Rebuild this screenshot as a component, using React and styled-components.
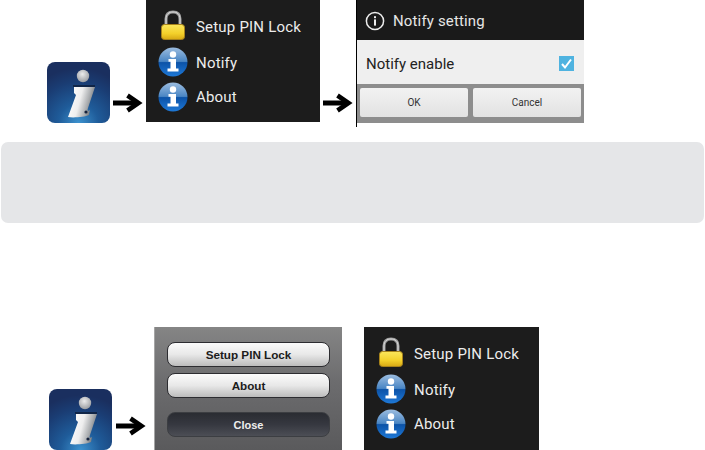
import React from "react";
import styled, { createGlobalStyle } from "styled-components";

const Global = createGlobalStyle`
  html, body { margin: 0; padding: 0; background: #fff; }
  body { font-family: "Roboto", "Liberation Sans", sans-serif; overflow: hidden; }
`;

const Page = styled.div`
  width: 705px;
  height: 450px;
  overflow: hidden;
  display: flex;
  flex-direction: column;
`;

const TopRow = styled.div`
  display: flex;
  align-items: flex-start;
  height: 127px;
  padding-left: 47px;
  flex: none;
`;

const BottomRow = styled.div`
  display: flex;
  align-items: flex-start;
  height: 123px;
  padding-left: 49px;
  margin-top: 104px;
  flex: none;
`;

const IconSlot = styled.div`
  width: 63px;
  height: 61px;
  margin-top: ${(p) => p.$top}px;
  flex: none;
  svg { display: block; }
`;

const ArrowSlot = styled.div`
  width: 30px;
  height: 20px;
  flex: none;
  margin-top: ${(p) => p.$top}px;
  margin-left: ${(p) => p.$left}px;
  margin-right: ${(p) => p.$right}px;
  svg { display: block; }
`;

const MenuPanel = styled.div`
  width: ${(p) => p.$width}px;
  height: ${(p) => p.$height}px;
  margin-top: ${(p) => p.$top}px;
  margin-left: ${(p) => p.$left || 0}px;
  background: #1c1c1c;
  flex: none;
  display: flex;
  flex-direction: column;
  padding-top: 9px;
  box-sizing: border-box;
`;

const MenuRow = styled.div`
  display: flex;
  align-items: center;
  height: ${(p) => p.$h}px;
  color: #ececec;
  font-size: 15px;
  letter-spacing: 0.2px;
`;

const MenuIcon = styled.div`
  width: 30px;
  height: 32px;
  margin-left: 12px;
  margin-right: 8px;
  margin-bottom: ${(p) => p.$lift || 0}px;
  flex: none;
  display: flex;
  align-items: center;
  justify-content: center;
  svg { display: block; }
`;

const DialogWrap = styled.div`
  height: 127px;
  border-left: 1px solid #000;
  flex: none;
  width: 227px;
`;

const DialogTitle = styled.div`
  height: 40px;
  background: #1a1a1a;
  color: #e6e6e6;
  display: flex;
  align-items: center;
  gap: 8px;
  padding: 2px 0 0 8px;
  box-sizing: border-box;
  font-size: 15px;
  letter-spacing: 0.15px;
`;

const DialogBody = styled.div`
  height: 44px;
  background: #efefef;
  color: #222;
  display: flex;
  align-items: center;
  justify-content: space-between;
  padding: 3px 10px 0 9px;
  box-sizing: border-box;
  font-size: 15px;
`;

const CheckBox = styled.div`
  width: 15px;
  height: 15px;
  background: #4fb3e0;
  display: flex;
  align-items: center;
  justify-content: center;
`;

const ButtonBar = styled.div`
  height: 39px;
  background: #8d8d8d;
  display: flex;
  gap: 5px;
  padding: 4px 3px 6px;
  box-sizing: border-box;
`;

const DialogButton = styled.div`
  flex: 1;
  background: linear-gradient(#f2f2f2, #e2e2e2);
  border-radius: 2px;
  color: #333;
  font-size: 10px;
  display: flex;
  align-items: center;
  justify-content: center;
`;

const Banner = styled.div`
  margin: 15px 0 0 1px;
  width: 703px;
  height: 81px;
  background: #e5e6e8;
  border-radius: 7px;
  flex: none;
`;

const SheetPanel = styled.div`
  width: 188px;
  height: 123px;
  flex: none;
  background: linear-gradient(#858585 0%, #6c6c6e 45%, #5a5a5c 100%);
  border-left: 1px solid #a5a5a5;
  display: flex;
  flex-direction: column;
  padding: 15px 12px 0 12px;
  box-sizing: border-box;
`;

const SheetButton = styled.div`
  height: 25px;
  margin-top: ${(p) => p.$mt}px;
  box-sizing: border-box;
  border-radius: 8px;
  border: 1.5px solid ${(p) => (p.$dark ? "#3c3e42" : "#2c2c30")};
  font-family: "Liberation Sans", Arial, sans-serif;
  font-weight: 700;
  font-size: ${(p) => p.$fs}px;
  display: flex;
  align-items: center;
  justify-content: center;
  color: ${(p) => (p.$dark ? "#eee" : "#1c1c1c")};
  background: ${(p) =>
    p.$dark
      ? "linear-gradient(#2a2c32 0%, #363840 50%, #4c4e55 100%)"
      : "linear-gradient(#fbfbfb 0%, #e8e8e8 50%, #bcbcbc 100%)"};
`;

const Arrow = () => (
  <svg width="30" height="20" viewBox="0 0 30 20">
    <path d="M0 10H24" stroke="#000" strokeWidth="5" fill="none" />
    <path d="M14.5 2.5L25.5 10L14.5 17.5" stroke="#000" strokeWidth="4.6" fill="none" />
  </svg>
);

const AppIcon = ({ id }) => (
  <svg width="63" height="61" viewBox="0 0 63 61">
    <defs>
      <radialGradient id={`bg${id}`} cx="0.5" cy="1" r="0.9">
        <stop offset="0" stopColor="#3d92cf" />
        <stop offset="0.35" stopColor="#1f5c9a" />
        <stop offset="0.75" stopColor="#1a3d74" />
        <stop offset="1" stopColor="#1a2f5f" />
      </radialGradient>
      <linearGradient id={`ch${id}`} x1="0" y1="0.35" x2="1" y2="0.65">
        <stop offset="0" stopColor="#ffffff" />
        <stop offset="0.42" stopColor="#eeeeee" />
        <stop offset="0.72" stopColor="#a8abae" />
        <stop offset="1" stopColor="#55595f" />
      </linearGradient>
      <radialGradient id={`dot${id}`} cx="0.45" cy="0.35" r="0.7">
        <stop offset="0" stopColor="#ececec" />
        <stop offset="1" stopColor="#94979c" />
      </radialGradient>
    </defs>
    <rect width="63" height="61" rx="8" fill={`url(#bg${id})`} />
    <circle cx="36" cy="14" r="6.2" fill={`url(#dot${id})`} />
    <path d="M26 24H48" stroke="#0d1a33" strokeWidth="1.4" />
    <path d="M27 25H48L41 46C40 49 41 49.5 43 48L42 53C38 55 26 56 21 55L29 33L27 31Z" fill={`url(#ch${id})`} />
    <circle cx="39" cy="50" r="1.6" fill="#16233e" />
  </svg>
);

const Lock = ({ id }) => (
  <svg width="26" height="30" viewBox="0 0 26 30">
    <defs>
      <linearGradient id={`lk${id}`} x1="0" y1="0" x2="0" y2="1">
        <stop offset="0" stopColor="#fbe75c" />
        <stop offset="0.6" stopColor="#f3d02a" />
        <stop offset="1" stopColor="#d7a814" />
      </linearGradient>
    </defs>
    <path d="M6 15V9C6 4 9 2 13 2S20 4 20 9V15" fill="none" stroke="#9c9c9c" strokeWidth="3" />
    <path d="M6 15V9C6 4 9 2 13 2S20 4 20 9V15" fill="none" stroke="#dcdcdc" strokeWidth="1" />
    <rect x="1.5" y="14.5" width="23" height="15" rx="3" fill={`url(#lk${id})`} stroke="#a8831a" strokeWidth="1" />
  </svg>
);

const Info = ({ id }) => (
  <svg width="30" height="30" viewBox="0 0 30 30">
    <defs>
      <linearGradient id={`in${id}`} x1="0" y1="0" x2="0" y2="1">
        <stop offset="0" stopColor="#9cbde0" />
        <stop offset="0.48" stopColor="#4a86c4" />
        <stop offset="0.52" stopColor="#0c53a8" />
        <stop offset="1" stopColor="#1e78d6" />
      </linearGradient>
    </defs>
    <circle cx="15" cy="15" r="14.5" fill={`url(#in${id})`} />
    <circle cx="15" cy="7.5" r="3.2" fill="#fff" />
    <path d="M10.5 12H18V21.5H20.5V24.5H9.5V21.5H12.5V14.7H10.5Z" fill="#fff" />
  </svg>
);

const Menu = ({ id, width, top, left }) => (
  <MenuPanel $width={width} $height={id === "a" ? 122 : 123} $top={top} $left={left}>
    <MenuRow $h={36}>
      <MenuIcon $lift={4}><Lock id={id} /></MenuIcon>Setup PIN Lock
    </MenuRow>
    <MenuRow $h={35}>
      <MenuIcon $lift={2}><Info id={`${id}1`} /></MenuIcon>Notify
    </MenuRow>
    <MenuRow $h={34}>
      <MenuIcon><Info id={`${id}2`} /></MenuIcon>About
    </MenuRow>
  </MenuPanel>
);

export default function App() {
  return (
    <Page>
      <Global />
      <TopRow>
        <IconSlot $top={62}><AppIcon id="t" /></IconSlot>
        <ArrowSlot $top={93} $left={3} $right={3}><Arrow /></ArrowSlot>
        <Menu id="a" width={174} top={0} />
        <ArrowSlot $top={93} $left={3} $right={3}><Arrow /></ArrowSlot>
        <DialogWrap>
          <DialogTitle>
            <svg width="20" height="20" viewBox="0 0 20 20">
              <circle cx="10" cy="10" r="8.6" fill="none" stroke="#eee" strokeWidth="1.5" />
              <rect x="9" y="8.4" width="2" height="6.2" fill="#eee" />
              <rect x="9" y="5.2" width="2" height="2" fill="#eee" />
            </svg>
            Notify setting
          </DialogTitle>
          <DialogBody>
            Notify enable
            <CheckBox>
              <svg width="13" height="13" viewBox="0 0 13 13">
                <path d="M2 7L5 10.5L11 2.5" fill="none" stroke="#fff" strokeWidth="2" />
              </svg>
            </CheckBox>
          </DialogBody>
          <ButtonBar>
            <DialogButton>OK</DialogButton>
            <DialogButton>Cancel</DialogButton>
          </ButtonBar>
        </DialogWrap>
      </TopRow>
      <Banner />
      <BottomRow>
        <IconSlot $top={62}><AppIcon id="b" /></IconSlot>
        <ArrowSlot $top={89} $left={4} $right={8}><Arrow /></ArrowSlot>
        <SheetPanel>
          <SheetButton $mt={0} $fs={11.7}>Setup PIN Lock</SheetButton>
          <SheetButton $mt={6} $fs={11.7}>About</SheetButton>
          <SheetButton $mt={14} $dark $fs={11}>Close</SheetButton>
        </SheetPanel>
        <Menu id="c" width={175} top={0} left={22} />
      </BottomRow>
    </Page>
  );
}
